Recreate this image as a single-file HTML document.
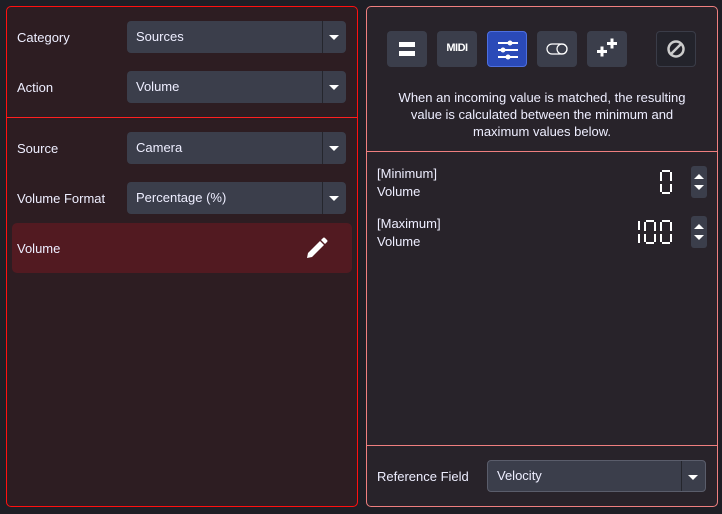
<!DOCTYPE html>
<html><head><meta charset="utf-8"><style>
*{margin:0;padding:0;box-sizing:border-box}
body{width:722px;height:514px;background:#1e1e25;font-family:"Liberation Sans",sans-serif;font-size:13px;color:#eef;position:relative;overflow:hidden}
.a{position:absolute}
.lp{left:6px;top:6px;width:352px;height:501px;border:1.5px solid #ff1010;border-radius:5px;background:#2d1d22}
.rp{left:366px;top:6px;width:352px;height:501px;border:1.5px solid #ef7f7f;border-radius:5px;background:#28232a}
.lbl{position:absolute;line-height:16px}
.sel{position:absolute;height:32px;background:#3b3e4b;border-radius:4px}
.sel span{position:absolute;left:9px;top:8px}
.sel i{position:absolute;right:0;top:0;width:24px;height:32px;border-left:1px solid #25262d}
.sel i:after{content:"";position:absolute;left:6px;top:14px;border-left:5px solid transparent;border-right:5px solid transparent;border-top:5px solid #fff}
.btn{position:absolute;top:31px;width:40px;height:36px;border-radius:4px;background:#3b3e4b}
.spin{position:absolute;left:691px;width:16px;height:32px;background:#3b3e4b;border-radius:3px}
.spin:before{content:"";position:absolute;left:3px;top:8px;border-left:5px solid transparent;border-right:5px solid transparent;border-bottom:5px solid #fff}
.spin:after{content:"";position:absolute;left:3px;top:19px;border-left:5px solid transparent;border-right:5px solid transparent;border-top:5px solid #fff}
</style></head><body>
<div class="a lp"></div>
<div class="a rp"></div>

<div class="lbl" style="left:17px;top:30px">Category</div>
<div class="sel" style="left:127px;top:21px;width:219px"><span>Sources</span><i></i></div>
<div class="lbl" style="left:17px;top:80px">Action</div>
<div class="sel" style="left:127px;top:71px;width:219px"><span>Volume</span><i></i></div>
<div class="a" style="left:7px;top:117px;width:350px;height:1px;background:#ff2020"></div>
<div class="lbl" style="left:17px;top:141px">Source</div>
<div class="sel" style="left:127px;top:132px;width:219px"><span>Camera</span><i></i></div>
<div class="lbl" style="left:17px;top:191px">Volume Format</div>
<div class="sel" style="left:127px;top:182px;width:219px"><span>Percentage (%)</span><i></i></div>
<div class="a" style="left:12px;top:223px;width:340px;height:50px;background:#521a21;border-radius:5px"></div>
<div class="lbl" style="left:17px;top:241px">Volume</div>
<svg class="a" style="left:305px;top:236px" width="24" height="24" viewBox="0 0 24 24"><path d="M2 22 L3 17 L15 5 L19 9 L7 21 Z M16 4 L18 2 Q19 1 20 2 L22 4 Q23 5 22 6 L20 8 Z" fill="#fff"/></svg>

<div class="btn" style="left:387px"><div class="a" style="left:12px;top:11px;width:16px;height:5px;background:#fff"></div><div class="a" style="left:12px;top:20px;width:16px;height:5px;background:#fff"></div></div>
<div class="btn" style="left:437px"><div class="a" style="left:0;top:11px;width:40px;text-align:center;font-weight:bold;font-size:11px;letter-spacing:-0.5px;color:#fff">MIDI</div></div>
<div class="btn" style="left:487px;background:#2a4ab8;border:1px solid #4d6fe0">
<svg class="a" style="left:9px;top:7px" width="22" height="22" viewBox="0 0 22 22" fill="#fff"><rect x="1" y="3" width="20" height="2"/><rect x="1" y="10" width="20" height="2"/><rect x="1" y="17" width="20" height="2"/><circle cx="13" cy="4" r="2.5"/><circle cx="6" cy="11" r="2.5"/><circle cx="11" cy="18" r="2.5"/></svg></div>
<div class="btn" style="left:537px"><svg class="a" style="left:9px;top:11px" width="22" height="14" viewBox="0 0 22 14" fill="none" stroke="#fff" stroke-width="1.2"><rect x="1" y="2" width="20" height="10" rx="5"/><circle cx="16" cy="7" r="5"/></svg></div>
<div class="btn" style="left:587px"><svg class="a" style="left:9px;top:6px" width="22" height="24" viewBox="0 0 22 24" fill="#fff"><rect x="1" y="13" width="10" height="3"/><rect x="4.5" y="9.5" width="3" height="10"/><rect x="11" y="5" width="10" height="3"/><rect x="14.5" y="1.5" width="3" height="10"/></svg></div>
<div class="btn" style="left:656px;background:#23232b;border:1px solid #3a3c48"><svg class="a" style="left:9px;top:7px" width="20" height="20" viewBox="0 0 20 20" fill="none" stroke="#ccc" stroke-width="2.5"><circle cx="10" cy="10" r="7.5"/><line x1="5" y1="15" x2="15" y2="5"/></svg></div>

<div class="a" style="left:386px;top:89px;width:312px;text-align:center;line-height:17px">When an incoming value is matched, the resulting value is calculated between the minimum and maximum values below.</div>
<div class="a" style="left:367px;top:151px;width:350px;height:1px;background:#ef7f7f"></div>

<div class="lbl" style="left:377px;top:165px;line-height:18px">[Minimum]<br>Volume</div>
<div class="lbl" style="left:377px;top:215px;line-height:18px">[Maximum]<br>Volume</div>
<svg class="a" style="left:630px;top:165px" width="50" height="85" fill="none" stroke="#fff" stroke-width="2">
<path d="M32 6 H40 M31 7 V16 M41 7 V16 M31 19 V27 M41 19 V27 M32 28 H40"/>
<path d="M9 56 V65 M9 69 V78"/>
<path d="M16 56 H24 M15 57 V66 M25 57 V66 M15 69 V77 M25 69 V77 M16 78 H24"/>
<path d="M32 56 H40 M31 57 V66 M41 57 V66 M31 69 V77 M41 69 V77 M32 78 H40"/>
</svg>
<div class="spin" style="top:166px"></div>
<div class="spin" style="top:216px"></div>

<div class="a" style="left:367px;top:445px;width:350px;height:1px;background:#ef7f7f"></div>
<div class="lbl" style="left:377px;top:469px">Reference Field</div>
<div class="sel" style="left:487px;top:460px;width:219px;border:1px solid #5a5d6b"><span style="top:7px">Velocity</span><i style="height:30px"></i></div>
</body></html>
